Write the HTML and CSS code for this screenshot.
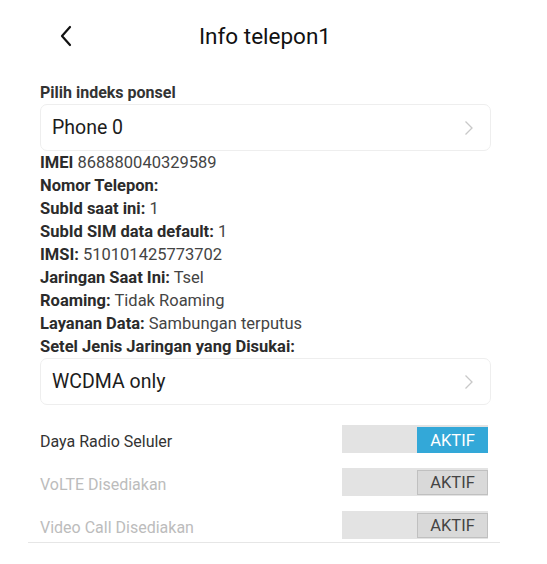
FILE: index.html
```html
<!DOCTYPE html>
<html lang="id">
<head>
  <meta charset="UTF-8">
  <title>Info telepon1</title>
  <link rel="stylesheet" href="styles.css">
</head>
<body>
<div class="screen">
  <!-- header -->
  <div class="header">
    <svg class="back" width="14" height="22" viewBox="0 0 14 22"><path d="M11 2 L3 11 L11 20" fill="none" stroke="#111" stroke-width="2.2" stroke-linecap="round" stroke-linejoin="round"/></svg>
    <div class="title">Info telepon1</div>
  </div>

  <div class="content">
    <div class="caption">Pilih indeks ponsel</div>
    <div class="picker">
      <span>Phone 0</span>
      <svg class="chev" width="10" height="16" viewBox="0 0 10 16"><path d="M1.5 1.5 L8 8 L1.5 14.5" fill="none" stroke="#c8c8c8" stroke-width="1.3"/></svg>
    </div>

    <div class="info">
      <div><b>IMEI</b> 868880040329589</div>
      <div><b>Nomor Telepon:</b></div>
      <div><b>SubId saat ini:</b> 1</div>
      <div><b>SubId SIM data default:</b> 1</div>
      <div><b>IMSI:</b> 510101425773702</div>
      <div><b>Jaringan Saat Ini:</b> Tsel</div>
      <div><b>Roaming:</b> Tidak Roaming</div>
      <div><b>Layanan Data:</b> Sambungan terputus</div>
      <div><b>Setel Jenis Jaringan yang Disukai:</b></div>
    </div>
    <div class="picker">
      <span>WCDMA only</span>
      <svg class="chev" width="10" height="16" viewBox="0 0 10 16"><path d="M1.5 1.5 L8 8 L1.5 14.5" fill="none" stroke="#c8c8c8" stroke-width="1.3"/></svg>
    </div>

    <div class="switches">
      <div class="row">
        <span class="label">Daya Radio Seluler</span>
        <div class="track"><div class="thumb on">AKTIF</div></div>
      </div>
      <div class="row off">
        <span class="label">VoLTE Disediakan</span>
        <div class="track"><div class="thumb">AKTIF</div></div>
      </div>
      <div class="row off">
        <span class="label">Video Call Disediakan</span>
        <div class="track"><div class="thumb">AKTIF</div></div>
      </div>
    </div>
  </div>
  <div class="divider"></div>
</div>
</body>
</html>
```

FILE: styles.css
```css
body{margin:0;background:#fff;font-family:Roboto,"Noto Sans",Arial,sans-serif;color:#333}
.screen{width:547px;height:564px;overflow:hidden}
.header{position:relative;height:30px;margin-top:21px;display:flex;justify-content:center;align-items:center}
.back{position:absolute;left:59px;top:4px}
.title{font-size:22.5px;font-weight:400;color:#111;line-height:30px;margin-right:17px}
.content{padding:30px 56px 0 40px}
.caption{font-size:16px;font-weight:700;color:#333;line-height:23px}
.picker{height:45px;border:1px solid #eeeeee;border-radius:7px;display:flex;align-items:center;justify-content:space-between;padding:0 16px 0 11px;font-size:19.5px;color:#1c1c1c}
.chev{margin-top:1px}
.info{font-size:16.5px;line-height:23px;color:#444}
.info b{font-weight:700;color:#2b2b2b}
.switches{margin-top:20px;padding-right:3px}
.row{display:flex;align-items:center;justify-content:space-between;height:28px;margin-bottom:15px}
.row:last-child{margin-bottom:0}
.label{font-size:16px;color:#333;margin-top:5px}
.row.off .label{color:#bcbcbc}
.track{width:146px;height:28px;background:#e3e3e3;display:flex;justify-content:flex-end;align-items:flex-start}
.thumb{box-sizing:border-box;width:71px;height:25px;margin-top:2px;display:flex;align-items:center;justify-content:center;font-size:16.5px;color:#444;background:#d9d9d9;border:1px solid #c0c0c0}
.thumb.on{height:26px;background:#33a8d8;color:#fff;border:0}
.divider{margin:3px 47px 0 28px;height:1px;background:#e6e6e6}
```
